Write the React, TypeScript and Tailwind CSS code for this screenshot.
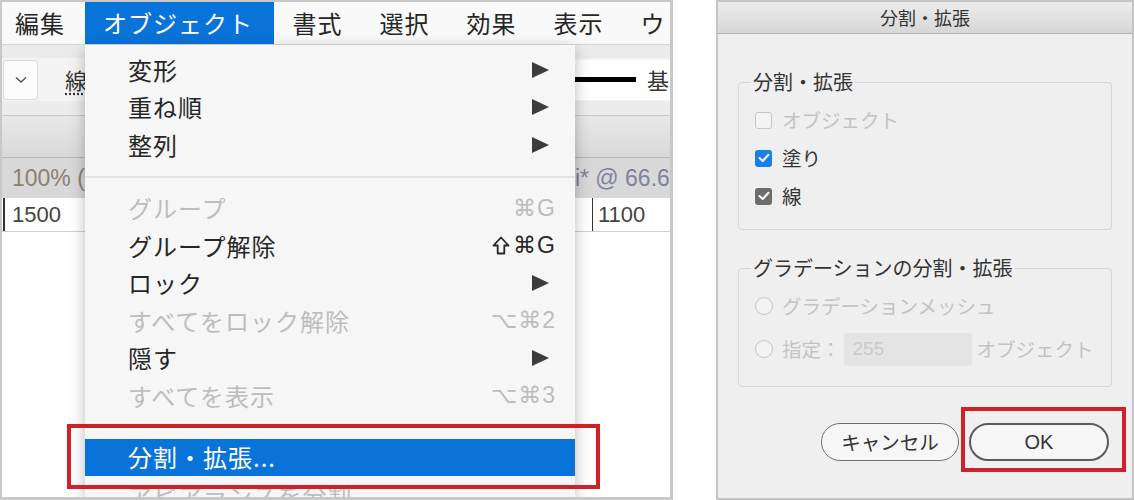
import React from "react";

const JP = "font-['Noto_Sans_CJK_JP','Noto_Sans_CJK_SC',sans-serif]";
const LAT = "font-['Liberation_Sans','DejaVu_Sans',sans-serif]";

const Arrow = () => (
  <svg width="17" height="16" viewBox="0 0 17 16" className="mr-[7px]">
    <path d="M0 0 L17 8 L0 16 Z" fill="#3c3c3c" />
  </svg>
);

const Shift = () => (
  <svg width="18" height="19" viewBox="0 0 18 19" className="mr-[3px]">
    <path d="M9 1.5 L16.5 9.5 L12.3 9.5 L12.3 17.5 L5.7 17.5 L5.7 9.5 L1.5 9.5 Z" fill="none" stroke="currentColor" strokeWidth="1.8" strokeLinejoin="round" />
  </svg>
);

type Item =
  | { kind: "sep"; h: string }
  | { kind: "item"; t: string; arrow?: boolean; sc?: string; shift?: boolean; dis?: boolean; hi?: boolean };

const items: Item[] = [
  { kind: "item", t: "変形", arrow: true },
  { kind: "item", t: "重ね順", arrow: true },
  { kind: "item", t: "整列", arrow: true },
  { kind: "sep", h: "h-[26px]" },
  { kind: "item", t: "グループ", sc: "⌘G", dis: true },
  { kind: "item", t: "グループ解除", sc: "⌘G", shift: true },
  { kind: "item", t: "ロック", arrow: true },
  { kind: "item", t: "すべてをロック解除", sc: "⌥⌘2", dis: true },
  { kind: "item", t: "隠す", arrow: true },
  { kind: "item", t: "すべてを表示", sc: "⌥⌘3", dis: true },
  { kind: "sep", h: "h-[24px]" },
  { kind: "item", t: "分割・拡張...", hi: true },
  { kind: "item", t: "アピアランスを分割", dis: true },
];

function Menu() {
  return (
    <div className="absolute left-[83px] top-0 bottom-0 w-[490px] bg-[#f6f6f6] shadow-[0_4px_14px_rgba(0,0,0,0.28)] pt-[6px]">
      {items.map((it, i) =>
        it.kind === "sep" ? (
          <div key={i} className={`${it.h} flex items-center`}>
            <div className="w-full h-[2px] bg-[#e3e3e3]" />
          </div>
        ) : (
          <div
            key={i}
            className={`h-[37.5px] flex items-center justify-between pl-[43px] pr-[19px] whitespace-nowrap ${
              it.hi ? "bg-[#0a73d9] text-white" : it.dis ? "text-[#bdbdbd]" : "text-[#262626]"
            }`}
          >
            <span className={`${JP} text-[24px] tracking-[1px] leading-none`}>{it.t}</span>
            {it.arrow && <Arrow />}
            {it.sc && (
              <span className={`${LAT} flex items-center text-[23px] leading-none tracking-[1px]`}>
                {it.shift && <Shift />}
                {it.sc}
              </span>
            )}
          </div>
        )
      )}
    </div>
  );
}

const barItems = ["書式", "選択", "効果", "表示", "ウ"];

function LeftPanel() {
  return (
    <div className="relative w-[673px] h-[500px] shrink-0 border-t-2 border-l-2 border-r-[3px] border-b-[3px] border-[#c8c8c8] flex flex-col overflow-hidden bg-white">
      <div className={`${JP} h-[43px] shrink-0 bg-[#f9f9f9] border-b border-[#d8d8d8] flex items-stretch text-[24px] tracking-[1px] text-[#262626] whitespace-nowrap overflow-hidden`}>
        <div className="pl-[13px] pr-[20px] flex items-center">編集</div>
        <div className="pl-[18px] pr-[21px] flex items-center bg-[#0a73d9] text-white">オブジェクト</div>
        {barItems.map((b) => (
          <div key={b} className="px-[18.5px] flex items-center">
            {b}
          </div>
        ))}
      </div>
      <div className="relative flex-1 flex flex-col">
        <div className="h-[13px] bg-[#ebebeb]" />
        <div className="h-[43px] bg-[#f3f3f3] flex items-center">
          <div className="ml-[1px] w-[35px] h-[40px] bg-[#fbfbfb] border border-[#dcdcdc] rounded-[3px] flex items-center justify-center">
            <svg width="12" height="8" viewBox="0 0 12 8">
              <path d="M1 1.5 L6 6 L11 1.5" fill="none" stroke="#555" strokeWidth="1.5" />
            </svg>
          </div>
          <span className={`${JP} ml-[27px] text-[22px] text-[#333] underline decoration-dotted underline-offset-4`}>線</span>
          <div className="ml-auto w-[170px] h-[40px] bg-white flex items-center whitespace-nowrap overflow-hidden">
            <div className="ml-[75px] w-[61px] h-[5px] bg-black shrink-0" />
            <span className={`${JP} ml-[11px] text-[22px] text-[#333]`}>基</span>
          </div>
        </div>
        <div className="h-[15px] bg-[#ececec] border-b border-[#cbcbcb]" />
        <div className="h-[42px] bg-gradient-to-b from-[#e8e8e8] to-[#d9d9d9] border-b border-[#b6b6b6]" />
        <div className={`${LAT} h-[40px] bg-[#d8d8d8] flex items-center text-[23px] whitespace-nowrap overflow-hidden`}>
          <span className="ml-[10px] text-[#8c8070]">100% (</span>
          <span className="ml-[490px] text-[#7f8299]">i* @ 66.6</span>
        </div>
        <div className={`${LAT} h-[34px] bg-white border-b border-[#d0d0d0] flex items-stretch text-[22px] text-[#444]`}>
          <div className="ml-[1px] w-[2px] bg-[#333]" />
          <span className="ml-[7px] self-center">1500</span>
          <div className="ml-[531px] w-[1px] bg-[#333]" />
          <span className="ml-[5px] self-center">1100</span>
        </div>
        <div className="flex-1 bg-white" />
        <Menu />
      </div>
      <div className="absolute left-[65px] top-[422px] w-[533px] h-[65px] border-4 border-[#d0202a]" />
    </div>
  );
}

const Check = ({ color }: { color: string }) => (
  <div className={`w-[17px] h-[17px] rounded-[3px] flex items-center justify-center ${color}`}>
    <svg width="12" height="10" viewBox="0 0 12 10">
      <path d="M1.5 5 L4.7 8 L10.5 1.8" fill="none" stroke="white" strokeWidth="2" strokeLinecap="round" strokeLinejoin="round" />
    </svg>
  </div>
);

const Radio = () => <div className="w-[18px] h-[18px] rounded-full border-[1.5px] border-[#c6c6c6] bg-[#f3f3f3]" />;

function Dialog() {
  return (
    <div className="relative ml-[43px] w-[418px] h-[500px] shrink-0 border-2 border-[#c4c4c4] bg-[#efefef] flex flex-col">
      <div className={`${JP} h-[32px] shrink-0 bg-gradient-to-b from-[#ececec] to-[#d7d7d7] border-b border-[#b2b2b2] flex items-center justify-center text-[18px] text-[#333]`}>
        分割・拡張
      </div>
      <div className={`${JP} px-[20px] flex flex-col text-[19.5px]`}>
        <fieldset className="mt-[36px] border border-[#d6d6d6] rounded-[4px] pl-[16px] pr-[16px] pt-[7px] pb-[14px]">
          <legend className="ml-[-4px] px-[2px] text-[20px] leading-[24px] text-[#333]">分割・拡張</legend>
          <div className="h-[38px] flex items-center gap-[10px] text-[#c3c3c3]">
            <div className="w-[17px] h-[17px] rounded-[3px] border border-[#c6c6c6] bg-[#f4f4f4]" />
            <span>オブジェクト</span>
          </div>
          <div className="h-[38px] flex items-center gap-[10px] text-[#333]">
            <Check color="bg-[#1a7fe8]" />
            <span>塗り</span>
          </div>
          <div className="h-[38px] flex items-center gap-[10px] text-[#333]">
            <Check color="bg-[#6d6d6d]" />
            <span>線</span>
          </div>
        </fieldset>
        <fieldset className="mt-[26px] border border-[#d6d6d6] rounded-[4px] pl-[16px] pr-[16px] pt-[7px] pb-[13px]">
          <legend className="ml-[-4px] px-[2px] text-[20px] leading-[24px] text-[#333]">グラデーションの分割・拡張</legend>
          <div className="h-[38px] flex items-center gap-[9px] text-[#c3c3c3]">
            <Radio />
            <span>グラデーションメッシュ</span>
          </div>
          <div className="h-[48px] flex items-center text-[#c3c3c3] whitespace-nowrap">
            <Radio />
            <span className="ml-[9px]">指定：</span>
            <div className={`${LAT} ml-[3px] w-[128px] h-[33px] bg-[#e4e4e4] rounded-[2px] flex items-center pl-[9px] text-[19px] text-[#cacaca]`}>
              255
            </div>
            <span className="ml-[5px]">オブジェクト</span>
          </div>
        </fieldset>
        <div className="mt-[36px] flex justify-end gap-[10px] pr-[3px]">
          <div className="w-[138px] h-[38px] rounded-full border border-[#707070] bg-[#f6f6f6] flex items-center justify-center text-[19.5px] text-[#333]">
            キャンセル
          </div>
          <div className={`${LAT} w-[140px] h-[38px] rounded-full border-2 border-[#5a5a5a] bg-[#f6f6f6] flex items-center justify-center text-[20px] text-[#333]`}>
            OK
          </div>
        </div>
      </div>
      <div className="absolute left-[243px] top-[405px] w-[165px] h-[65px] border-4 border-[#d0202a]" />
    </div>
  );
}

export default function App() {
  return (
    <div className="w-[1134px] h-[500px] bg-white flex overflow-hidden">
      <LeftPanel />
      <Dialog />
    </div>
  );
}
